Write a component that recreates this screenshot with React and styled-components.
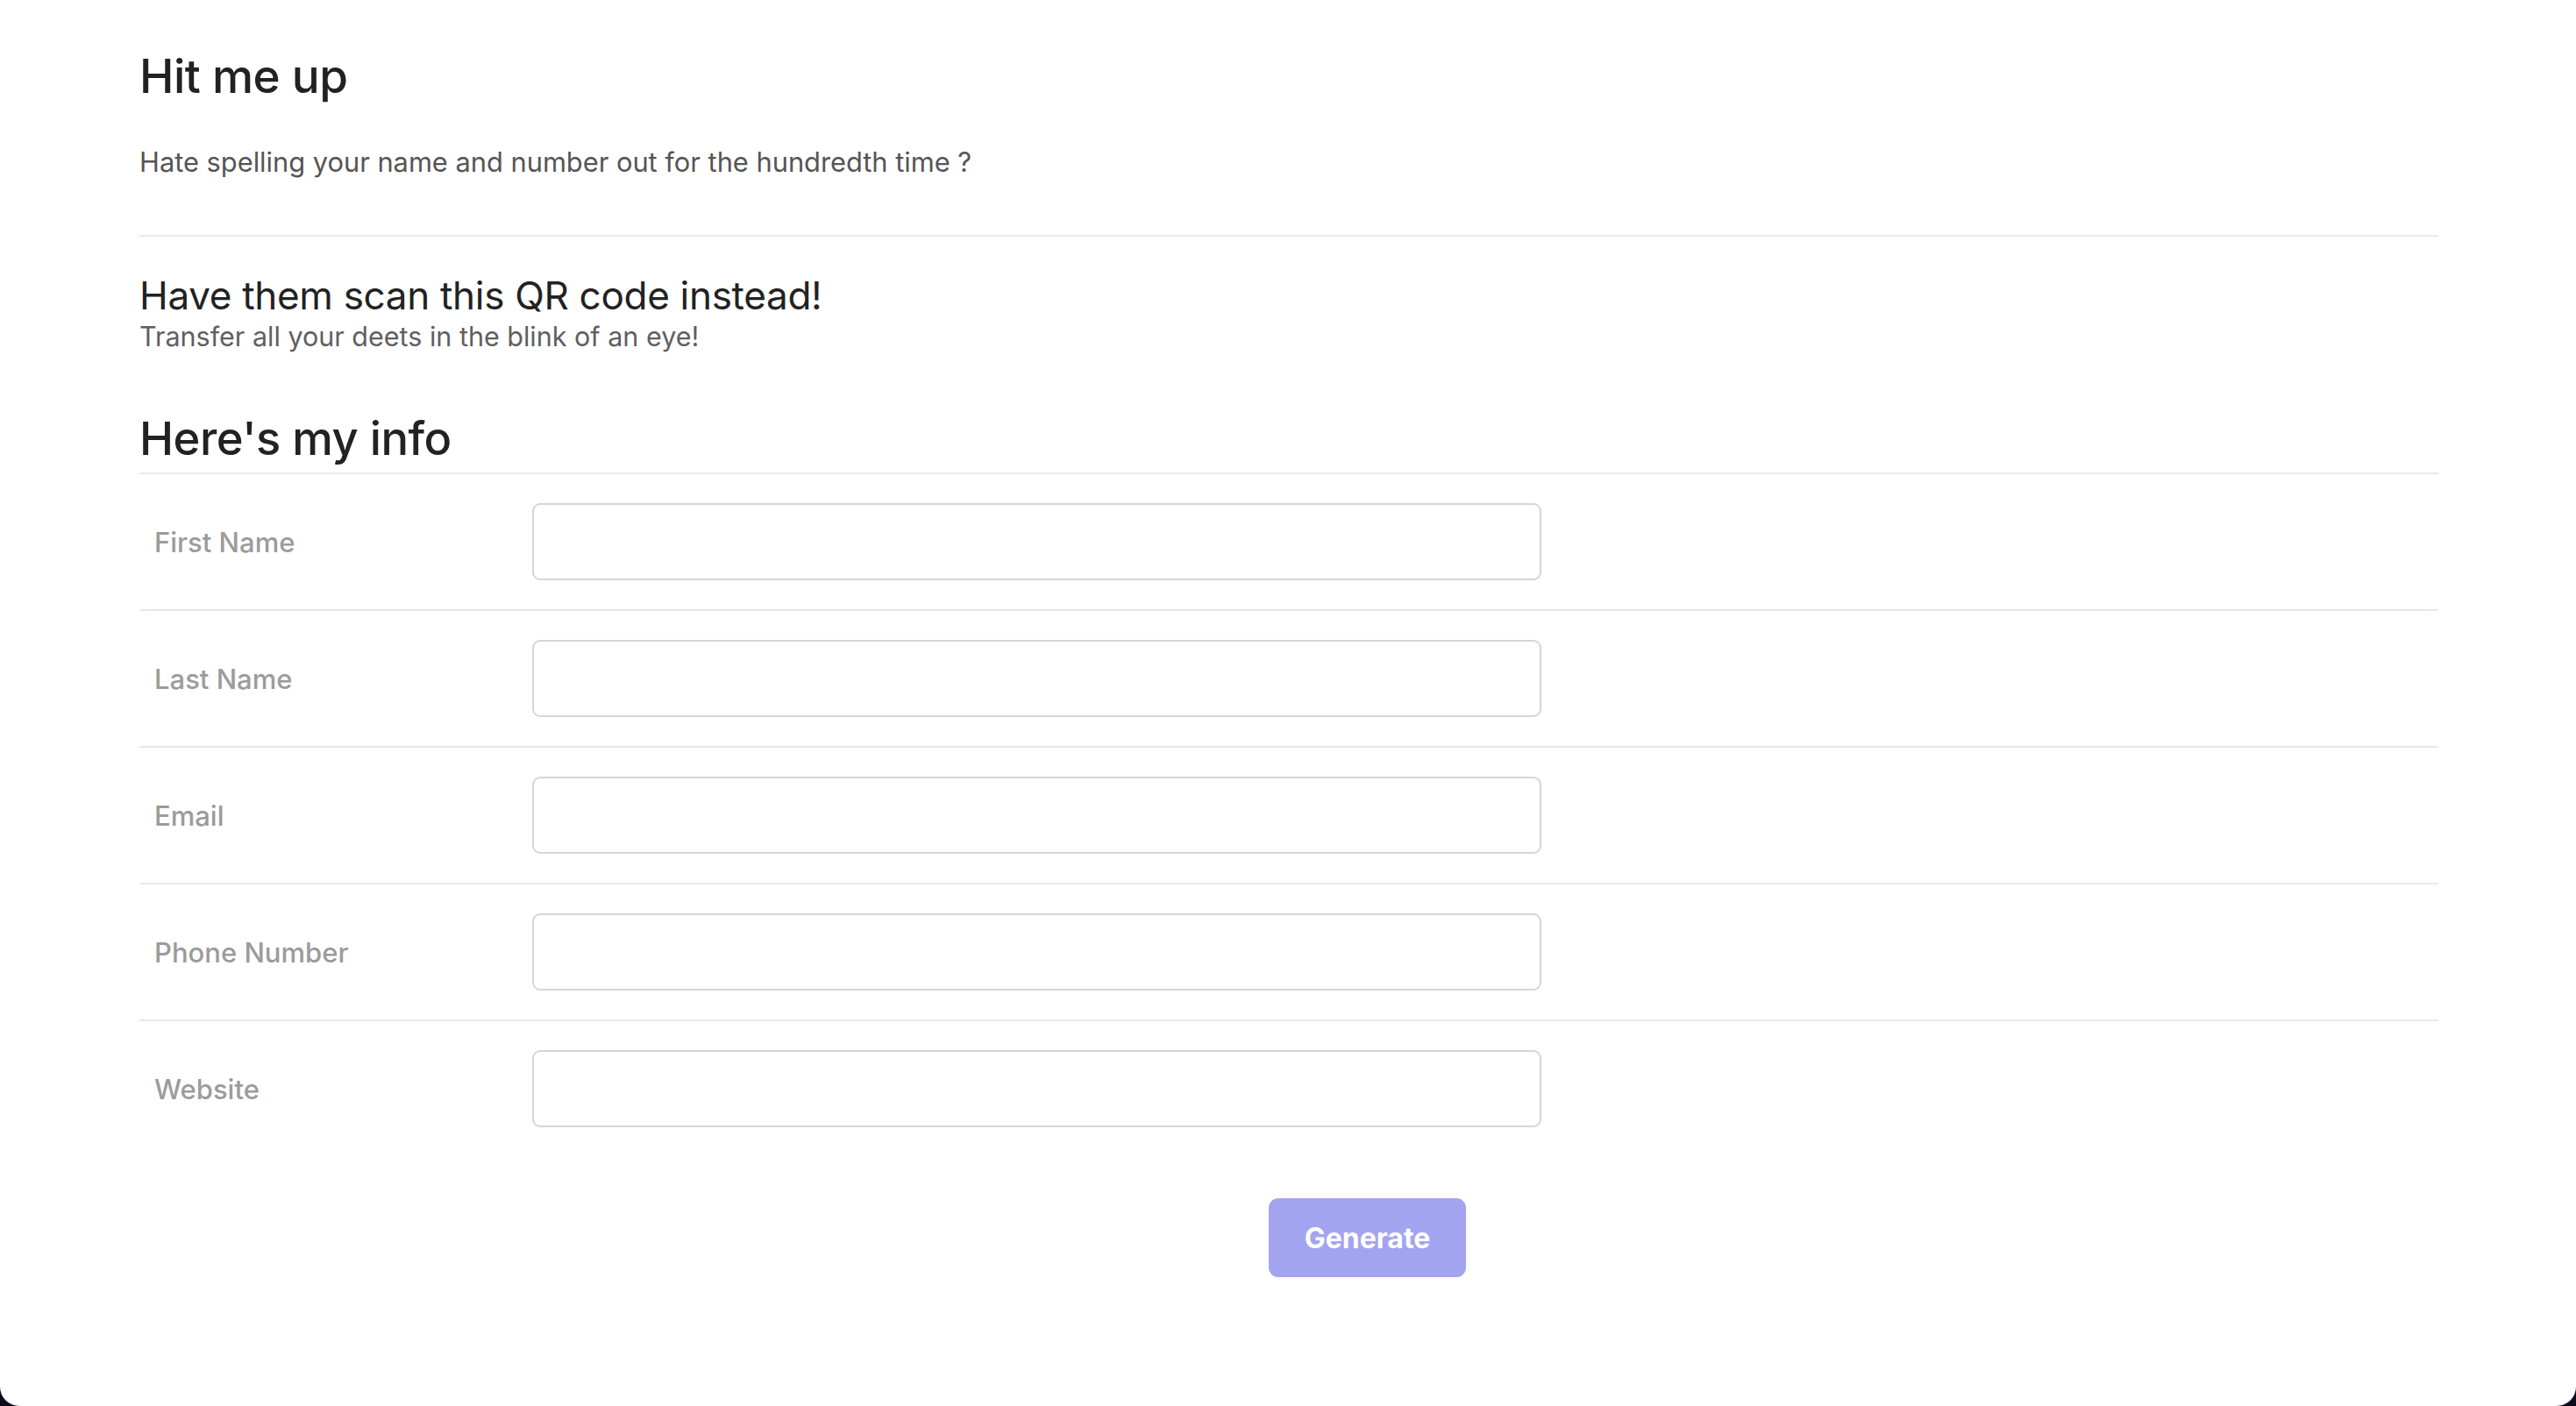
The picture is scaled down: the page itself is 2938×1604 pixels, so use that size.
import styled, { createGlobalStyle } from "styled-components";

const GlobalStyle = createGlobalStyle`
  html, body {
    margin: 0;
    padding: 0;
    background: #0d0b1e;
  }
  * {
    box-sizing: border-box;
  }
`;

const fields = ["First Name", "Last Name", "Email", "Phone Number", "Website"];

export default function App() {
  return (
    <>
      <GlobalStyle />
      <Window>
        <Container>
          <Intro>
            <Title>Hit me up</Title>
            <Lead>Hate spelling your name and number out for the hundredth time ?</Lead>
          </Intro>
          <Pitch>
            <SubTitle>Have them scan this QR code instead!</SubTitle>
            <SubText>Transfer all your deets in the blink of an eye!</SubText>
          </Pitch>
          <FormTitle>Here's my info</FormTitle>
          <Form onSubmit={(e) => e.preventDefault()}>
            {fields.map((name, i) => (
              <Row key={name} $last={i === fields.length - 1}>
                <Label htmlFor={name}>{name}</Label>
                <Input id={name} type="text" />
              </Row>
            ))}
            <Actions>
              <Button type="submit">Generate</Button>
            </Actions>
          </Form>
        </Container>
      </Window>
    </>
  );
}

const Window = styled.div`
  min-height: 1604px;
  background: #ffffff;
  border-radius: 0 0 22px 22px;
  font-family: Inter, "Noto Sans", sans-serif;
  color: #222222;
`;

const Container = styled.div`
  padding: 56px 157px 0 159px;
`;

const Intro = styled.section`
  padding-bottom: 59px;
  border-bottom: 2px solid #e5e9ef;
`;

const Title = styled.h1`
  margin: 0;
  font-size: 53px;
  line-height: 62px;
  font-weight: 500;
  letter-spacing: -0.5px;
  color: #222222;
`;

const Lead = styled.p`
  margin: 43px 0 0;
  font-size: 30.8px;
  line-height: 48px;
  font-weight: 400;
  color: #555555;
`;

const Pitch = styled.section`
  padding-top: 40px;
`;

const SubTitle = styled.h2`
  margin: 0;
  font-size: 44px;
  line-height: 54px;
  font-weight: 400;
  letter-spacing: -0.3px;
  color: #222222;
`;

const SubText = styled.p`
  margin: 0;
  font-size: 30.5px;
  line-height: 40px;
  color: #5f5f5f;
`;

const FormTitle = styled.h2`
  margin: 65px 0 0;
  padding-bottom: 8px;
  font-size: 52.5px;
  line-height: 62px;
  font-weight: 500;
  letter-spacing: -0.5px;
  color: #222222;
  border-bottom: 2px solid #e5e9ef;
`;

const Form = styled.form`
  display: flex;
  flex-direction: column;
`;

const Row = styled.div`
  display: grid;
  grid-template-columns: 448px 1151px;
  align-items: center;
  padding: 33px 0;
  border-bottom: ${(p) => (p.$last ? "none" : "2px solid #e5e9ef")};
`;

const Label = styled.label`
  padding-left: 17px;
  font-size: 31px;
  font-weight: 500;
  color: #9b9b9b;
`;

const Input = styled.input`
  height: 88px;
  width: 100%;
  border: 2px solid #d3d6db;
  border-radius: 9px;
  background: #ffffff;
  font-family: inherit;
  font-size: 30px;
  padding: 0 20px;
  outline: none;
`;

const Actions = styled.div`
  display: flex;
  padding: 48px 0 0 1288px;
`;

const Button = styled.button`
  width: 225px;
  height: 90px;
  border: none;
  border-radius: 11px;
  background: #a3a4f0;
  color: #ffffff;
  font-family: inherit;
  font-size: 32px;
  font-weight: 700;
  cursor: pointer;
`;
